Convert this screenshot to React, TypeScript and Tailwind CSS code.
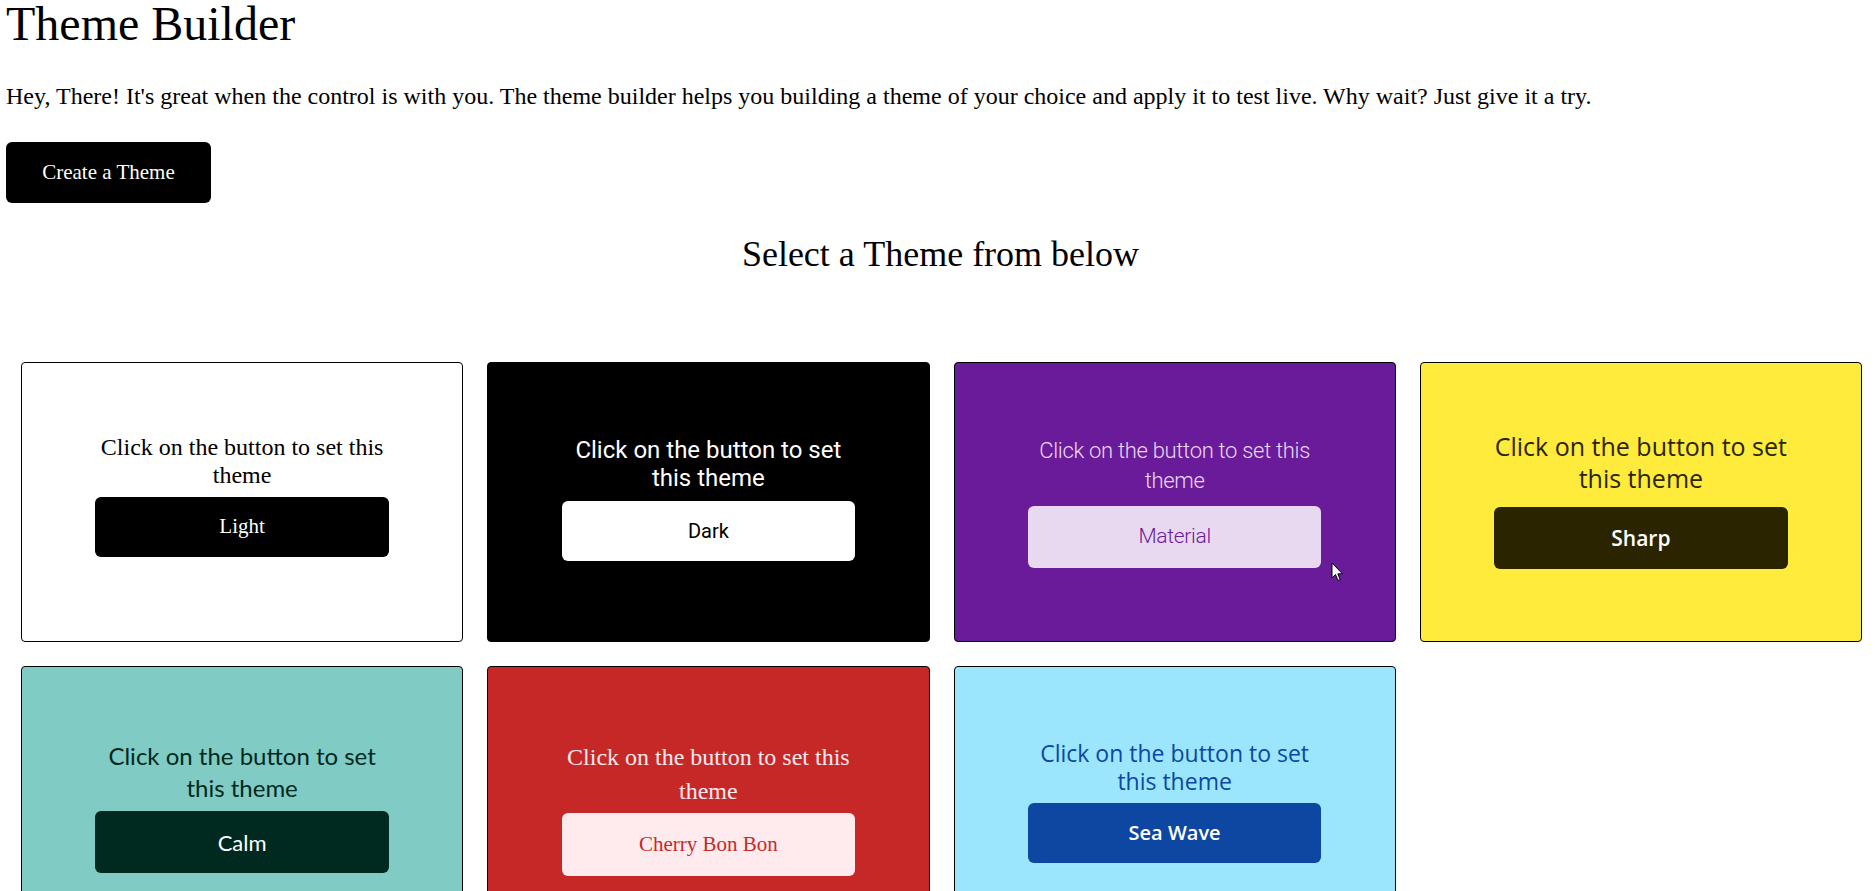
type Theme = {
    name: string;
    card: string;
    text: string;
    button: string;
    cursor?: boolean;
};

// every class written out in full so tailwind picks them up
const themes: Theme[] = [
    {
        name: "Light",
        card: "bg-white text-black border-black font-['Liberation_Serif',serif] pt-[71px]",
        text: "text-[24px] leading-[27.6px]",
        button: "mt-2 h-[60px] bg-black text-white text-[21px]",
    },
    {
        name: "Dark",
        card: "bg-black text-white border-black font-['Roboto',sans-serif] pt-[73px]",
        text: "text-[24px] leading-[28px]",
        button: "mt-[9px] h-[60px] bg-white text-black text-[20px] font-normal",
    },
    {
        name: "Material",
        card: "bg-[#6a1b9a] text-[#e8d9f1] border-black font-['Roboto',sans-serif] pt-[73px]",
        text: "text-[22px] leading-[30px] font-light tracking-[-0.3px]",
        button: "mt-[10px] h-[62px] bg-[#e8d9f1] text-[#6a1b9a] text-[21px] font-light tracking-[-0.3px]",
        cursor: true,
    },
    {
        name: "Sharp",
        card: "bg-[#ffeb3b] text-[#2a2500] border-black font-['Open_Sans',sans-serif] pt-[68px]",
        text: "text-[25px] leading-[31.7px]",
        button: "mt-[13px] h-[62px] bg-[#2a2500] text-white text-[21px] font-semibold",
    },
    {
        name: "Calm",
        card: "bg-[#80cbc4] text-[#00291f] border-black font-['Lato',sans-serif] pt-[73px]",
        text: "text-[24px] leading-[32px]",
        button: "mt-[7px] h-[62px] bg-[#00291f] text-white text-[22px] font-normal",
    },
    {
        name: "Cherry Bon Bon",
        card: "bg-[#c62828] text-[#ffebee] border-black font-['Liberation_Serif',serif] pt-[73px]",
        text: "text-[24px] leading-[34px]",
        button: "mt-[5px] h-[63px] bg-[#ffebee] text-[#c62828] text-[21px]",
    },
    {
        name: "Sea Wave",
        card: "bg-[#9be6fd] text-[#0d47a1] border-black font-['Open_Sans',sans-serif] pt-[73px]",
        text: "text-[23px] leading-[27.5px]",
        button: "mt-2 h-[60px] bg-[#0d47a1] text-white text-[20px] font-semibold",
    },
];

const Cursor = () => (
    <svg
        className="absolute left-[376px] top-[199px]"
        width="13"
        height="20"
        viewBox="0 0 13 20"
    >
        <path d="M1 1 L1 16 L4.5 12.5 L7 18.5 L9.2 17.6 L6.8 11.8 L11.5 11.8 Z" fill="#fff" stroke="#000" strokeWidth="1" />
    </svg>
);

const ThemeCard = ({ theme }: { theme: Theme }) => (
    <div className={`relative flex h-[280px] flex-col items-center rounded border ${theme.card}`}>
        <p className={`w-2/3 text-center ${theme.text}`}>Click on the button to set this theme</p>
        <button className={`w-2/3 rounded-md ${theme.button}`}>{theme.name}</button>
        {theme.cursor && <Cursor />}
    </div>
);

export default function App() {
    return (
        <div className="min-h-screen bg-white font-['Liberation_Serif',serif] text-black">
            <div className="px-[6px]">
                <h1 className="text-[48px] leading-none font-normal">Theme Builder</h1>
                <p className="mt-[34px] text-[24px] leading-[28px]">
                    Hey, There! It's great when the control is with you. The theme builder helps you building a theme of
                    your choice and apply it to test live. Why wait? Just give it a try.
                </p>
                <button className="mt-[32px] h-[61px] w-[205px] rounded-md bg-black text-[21px] text-white">
                    Create a Theme
                </button>
                <h2 className="mt-[31px] pl-[6px] text-center text-[36px] leading-[40px]">Select a Theme from below</h2>
            </div>
            <div className="mt-[88px] grid grid-cols-4 gap-6 pl-[21px] pr-[13px]">
                {themes.map(theme => (
                    <ThemeCard key={theme.name} theme={theme} />
                ))}
            </div>
        </div>
    );
}
